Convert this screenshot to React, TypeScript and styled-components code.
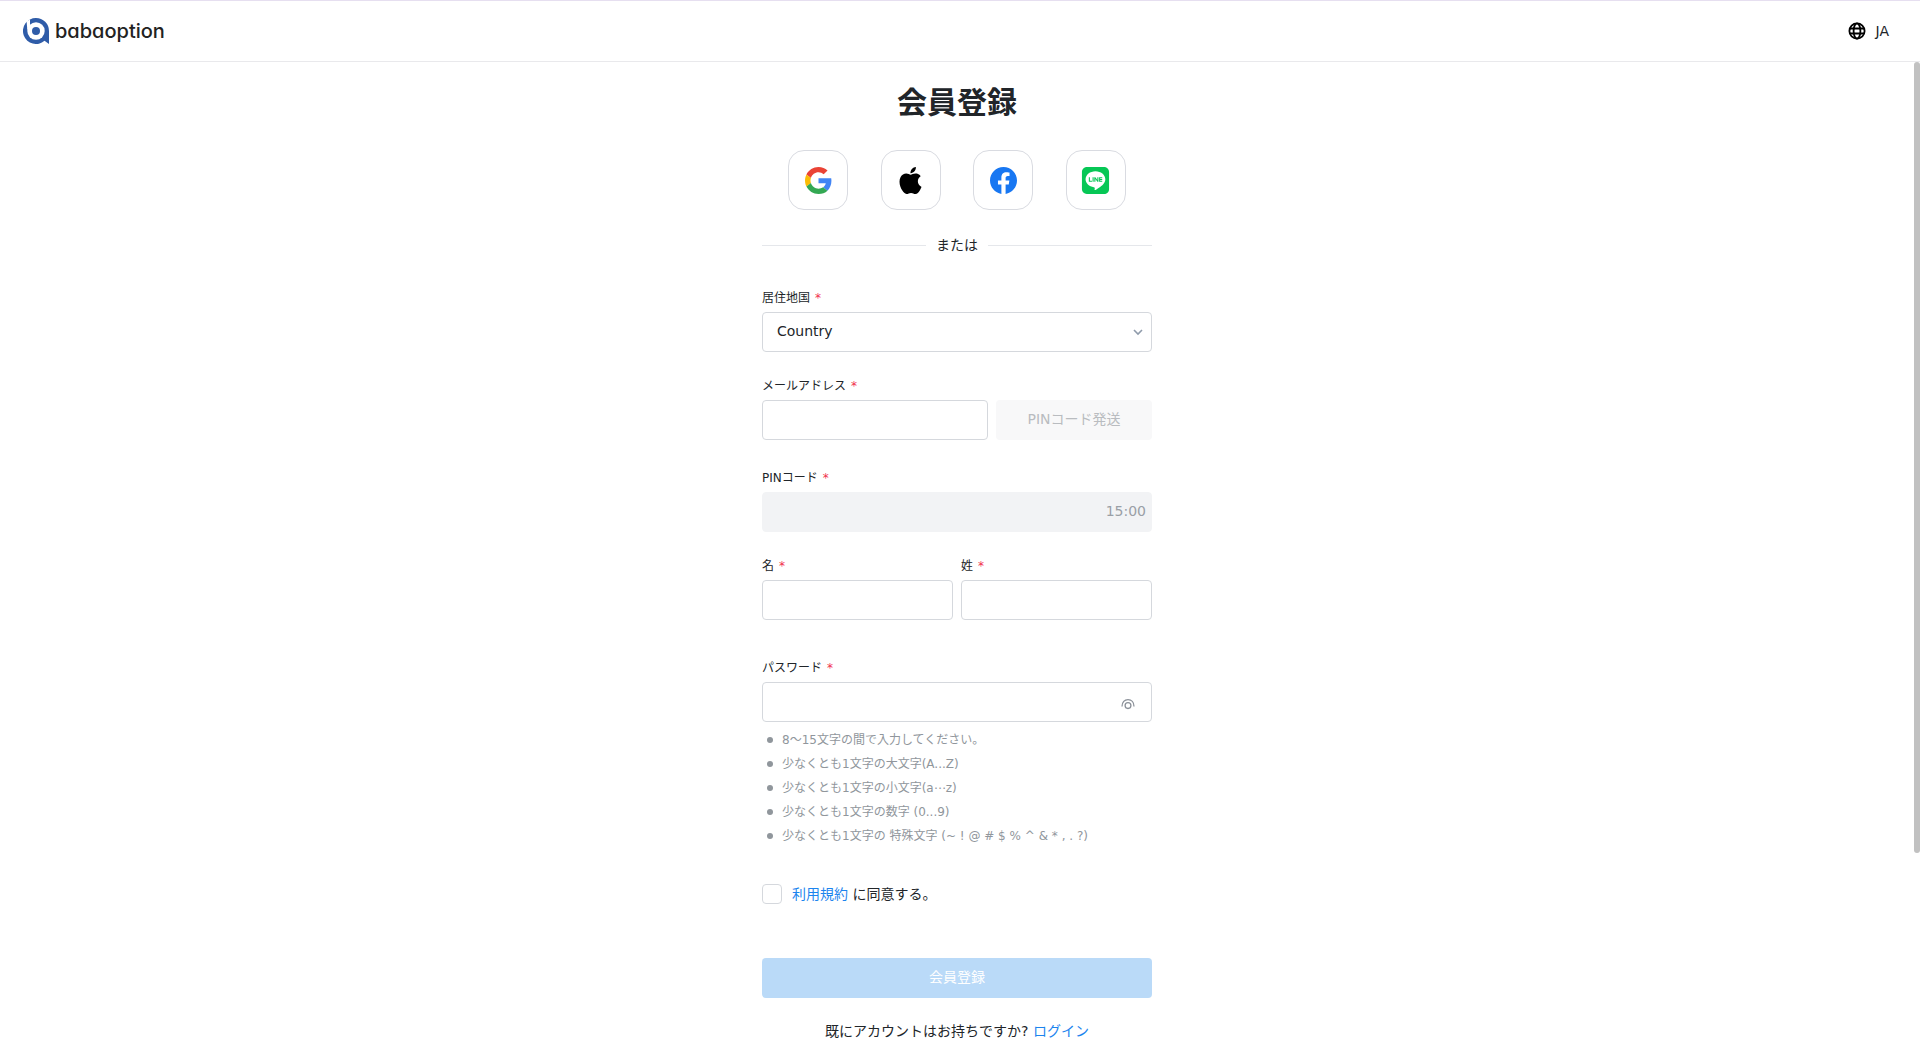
import React, { useEffect, useRef, useState } from "react";
import styled, { createGlobalStyle } from "styled-components";
import { FaLine } from "react-icons/fa";
import { SiApple } from "react-icons/si";

const Global = createGlobalStyle`
  *, *::before, *::after { box-sizing: border-box; }
  body {
    margin: 0;
    color: #212529;
    background: #fff;
    font-family: "DejaVu Sans", "Noto Sans CJK JP", sans-serif;
    font-size: 14px;
    line-height: 22px;
  }
  button, input, select { font: inherit; color: inherit; }
`;

const Page = styled.div`
  display: flex;
  flex-direction: column;
  height: 100vh;
`;

const Header = styled.header`
  display: flex;
  flex: none;
  align-items: center;
  justify-content: space-between;
  height: 62px;
  padding: 0 31px 0 23px;
  border-top: 1px solid #e6dff0;
  border-bottom: 1px solid #e9e9ec;
`;

const Brand = styled.a`
  display: flex;
  align-items: center;
  gap: 6px;
  color: #222;
  font-family: Inter, sans-serif;
  font-size: 20px;
  font-weight: 500;
  font-feature-settings: "cv11";
  line-height: 28px;
  text-decoration: none;
`;

const Language = styled.button`
  display: flex;
  align-items: center;
  gap: 10px;
  padding: 0;
  border: 0;
  background: none;
  cursor: pointer;
`;

const Body = styled.div`
  display: flex;
  flex: 1;
  min-height: 0;
`;

const Scroller = styled.main`
  flex: 1;
  overflow-y: auto;
  scrollbar-width: none;
`;

const Rail = styled.div`
  width: 6px;
`;

const Thumb = styled.div`
  border-radius: 3px;
  background: #c1c1c1;
`;

const Form = styled.form`
  width: 100%;
  max-width: 390px;
  margin: 0 auto;
  padding: 20px 0 229px;
`;

const Title = styled.h1`
  margin: 0 0 26px;
  font-size: 30px;
  font-weight: 700;
  line-height: 42px;
  text-align: center;
`;

const SocialRow = styled.div`
  display: flex;
  justify-content: space-between;
  margin-bottom: 24px;
  padding: 0 26px;
`;

const SocialButton = styled.button`
  display: flex;
  align-items: center;
  justify-content: center;
  width: 60px;
  height: 60px;
  padding: 0;
  border: 1px solid #d9dbe1;
  border-radius: 16px;
  background: #fff;
  cursor: pointer;
`;

const Divider = styled.div`
  display: flex;
  align-items: center;
  gap: 10px;
  margin-bottom: 32px;

  &::before,
  &::after {
    content: "";
    flex: 1;
    height: 1px;
    background: #e5e7eb;
  }
`;

const Field = styled.div<{ $space?: number }>`
  display: flex;
  flex: 1;
  flex-direction: column;
  gap: 4px;
  min-width: 0;
  margin-bottom: ${(p) => p.$space ?? 0}px;
`;

const Label = styled.label`
  font-size: 12px;
  line-height: 20px;
`;

const Required = styled.span`
  margin-left: 5px;
  color: #f1304d;
`;

const Columns = styled.div<{ $space?: number }>`
  display: flex;
  gap: 8px;
  margin-bottom: ${(p) => p.$space ?? 0}px;
`;

const Control = styled.div`
  position: relative;
`;

const Input = styled.input`
  display: block;
  width: 100%;
  min-width: 0;
  height: 40px;
  padding: 0 14px;
  border: 1px solid #d5d8dd;
  border-radius: 4px;
  background: #fff;
  outline: none;

  &:disabled {
    border-color: #f2f3f5;
    background: #f2f3f5;
  }
`;

const Select = styled.select`
  display: block;
  width: 100%;
  height: 40px;
  padding: 0 32px 2px 14px;
  border: 1px solid #d5d8dd;
  border-radius: 4px;
  background: #fff;
  appearance: none;
  outline: none;
`;

const Chevron = styled.svg`
  position: absolute;
  top: 16px;
  right: 9px;
  pointer-events: none;
`;

const Timer = styled.span`
  position: absolute;
  top: 8px;
  right: 6px;
  color: #9a9fa6;
`;

const Reveal = styled.button`
  position: absolute;
  top: 14px;
  right: 16px;
  display: flex;
  padding: 0;
  border: 0;
  background: none;
  color: #8b9199;
  cursor: pointer;
`;

const SendButton = styled.button`
  flex: none;
  width: 40%;
  height: 40px;
  padding: 0 0 2px;
  border: 0;
  border-radius: 4px;
  background: #f8f8f9;
  color: #b9bcc0;
`;

const Rules = styled.ul`
  display: flex;
  flex-direction: column;
  margin: 0 0 36px;
  padding: 0 0 0 5px;
  color: #90969c;
  font-size: 12px;
  line-height: 24px;
  list-style: none;
`;

const Rule = styled.li`
  display: flex;
  align-items: center;
  gap: 9px;
  height: 24px;

  &::before {
    content: "";
    width: 6px;
    height: 6px;
    border-radius: 50%;
    background: #90969c;
  }
`;

const Consent = styled.div`
  display: flex;
  align-items: center;
  gap: 10px;
  height: 20px;
  margin-bottom: 54px;
`;

const Checkbox = styled.input`
  width: 20px;
  height: 20px;
  margin: 0;
  border: 1px solid #d5d8dd;
  border-radius: 4px;
  background: #fff;
  appearance: none;

  &:checked { background: #1c84ee; }
`;

const Link = styled.a`
  color: #1c84ee;
  text-decoration: none;
`;

const Submit = styled.button`
  display: block;
  width: 100%;
  height: 40px;
  margin-bottom: 22px;
  padding: 0 0 2px;
  border: 0;
  border-radius: 4px;
  background: #badaf8;
  color: #fff;
`;

const Footer = styled.p`
  margin: 0;
  text-align: center;
`;

const BrandMark = () => (
  <svg width="26" height="26" viewBox="0 0 26 26" aria-hidden="true">
    <path d="M13 0a13 13 0 1 0 8.5 22.8L26 26V13A13 13 0 0 0 13 0z" fill="#2f5ca8" />
    <circle cx="13" cy="13" r="8.7" fill="#fff" />
    <path d="M3.6 3.4 7 1.4v10H4.3z" fill="#fff" />
    <circle cx="13" cy="13" r="4" fill="#2f5ca8" />
  </svg>
);

const Globe = () => (
  <svg width="18" height="18" viewBox="0 0 18 18" fill="none" stroke="#000" strokeWidth="1.8" aria-hidden="true">
    <circle cx="9" cy="9" r="7.6" />
    <ellipse cx="9" cy="9" rx="3.4" ry="7.6" />
    <path d="M2 6.5h14M2 11.5h14" />
  </svg>
);

const Google = () => (
  <svg width="27" height="27" viewBox="0 0 48 48" aria-hidden="true">
    <path fill="#EA4335" d="M24 9.5c3.54 0 6.71 1.22 9.21 3.6l6.85-6.85C35.9 2.38 30.47 0 24 0 14.62 0 6.51 5.38 2.56 13.22l7.98 6.19C12.43 13.72 17.74 9.5 24 9.5z" />
    <path fill="#4285F4" d="M46.98 24.55c0-1.57-.15-3.09-.38-4.55H24v9.02h12.94c-.58 2.96-2.26 5.48-4.78 7.18l7.73 6c4.51-4.18 7.09-10.36 7.09-17.65z" />
    <path fill="#FBBC05" d="M10.53 28.59c-.48-1.45-.76-2.99-.76-4.59s.27-3.14.76-4.59l-7.98-6.19C.92 16.46 0 20.12 0 24c0 3.88.92 7.54 2.56 10.78l7.97-6.19z" />
    <path fill="#34A853" d="M24 48c6.48 0 11.93-2.13 15.89-5.81l-7.73-6c-2.15 1.45-4.92 2.3-8.16 2.3-6.26 0-11.57-4.22-13.47-9.91l-7.98 6.19C6.51 42.62 14.62 48 24 48z" />
  </svg>
);

const Facebook = () => (
  <svg width="27" height="27" viewBox="0 0 24 24" aria-hidden="true">
    <path fill="#1877F2" d="M24 12.073c0-6.627-5.373-12-12-12s-12 5.373-12 12c0 5.99 4.388 10.954 10.125 11.854v-8.385H7.078v-3.47h3.047V9.43c0-3.007 1.792-4.669 4.533-4.669 1.312 0 2.686.235 2.686.235v2.953H15.83c-1.491 0-1.956.925-1.956 1.874v2.25h3.328l-.532 3.47h-2.796v8.385C19.612 23.027 24 18.062 24 12.073z" />
  </svg>
);

const Eye = () => (
  <svg width="16" height="16" viewBox="0 0 16 16" fill="none" stroke="currentColor" strokeWidth="1.3" aria-hidden="true">
    <path d="M2 10.5C2 6.2 4.6 3.6 8 3.6s6 2.6 6 6.9" />
    <circle cx="8" cy="9.6" r="2.9" />
  </svg>
);

const rules = [
  "8～15文字の間で入力してください。",
  "少なくとも1文字の大文字(A...Z)",
  "少なくとも1文字の小文字(a⋯z)",
  "少なくとも1文字の数字 (0...9)",
  "少なくとも1文字の 特殊文字 (~ ! @ # $ % ^ & * , . ?)",
];

const providers = [
  { name: "Google", icon: <Google /> },
  { name: "Apple", icon: <SiApple size={27} color="#000" /> },
  { name: "Facebook", icon: <Facebook /> },
  { name: "LINE", icon: <FaLine size={31} color="#06c755" /> },
];

function RequiredLabel({ id, children }: { id: string; children: React.ReactNode }) {
  return (
    <Label htmlFor={id}>
      {children}
      <Required>*</Required>
    </Label>
  );
}

export default function App() {
  const scroller = useRef<HTMLElement>(null);
  const [thumb, setThumb] = useState({ top: 0, height: 0 });
  const [visible, setVisible] = useState(false);

  const measure = () => {
    const el = scroller.current;
    if (!el) return;
    const ratio = el.clientHeight / el.scrollHeight;
    setThumb(
      ratio < 1
        ? { top: Math.round(el.scrollTop * ratio), height: Math.round(el.clientHeight * ratio) }
        : { top: 0, height: 0 },
    );
  };

  useEffect(() => {
    measure();
    window.addEventListener("resize", measure);
    return () => window.removeEventListener("resize", measure);
  }, []);

  return (
    <Page>
      <Global />
      <Header>
        <Brand href="#">
          <BrandMark />
          babaoption
        </Brand>
        <Language type="button">
          <Globe />
          JA
        </Language>
      </Header>
      <Body>
        <Scroller ref={scroller} onScroll={measure}>
          <Form onSubmit={(e) => e.preventDefault()}>
            <Title>会員登録</Title>
            <SocialRow>
              {providers.map((p) => (
                <SocialButton key={p.name} type="button" aria-label={p.name}>
                  {p.icon}
                </SocialButton>
              ))}
            </SocialRow>
            <Divider>または</Divider>

            <Field $space={24}>
              <RequiredLabel id="country">居住地国</RequiredLabel>
              <Control>
                <Select id="country">
                  <option>Country</option>
                </Select>
                <Chevron width="10" height="8" viewBox="0 0 10 8" fill="none" stroke="#8f9bab" strokeWidth="1.6">
                  <path d="M1 2l4 4 4-4" />
                </Chevron>
              </Control>
            </Field>

            <Field $space={28}>
              <RequiredLabel id="email">メールアドレス</RequiredLabel>
              <Columns>
                <Input id="email" type="email" />
                <SendButton type="button" disabled>
                  PINコード発送
                </SendButton>
              </Columns>
            </Field>

            <Field $space={24}>
              <RequiredLabel id="pin">PINコード</RequiredLabel>
              <Control>
                <Input id="pin" disabled />
                <Timer>15:00</Timer>
              </Control>
            </Field>

            <Columns $space={38}>
              <Field>
                <RequiredLabel id="first">名</RequiredLabel>
                <Input id="first" />
              </Field>
              <Field>
                <RequiredLabel id="last">姓</RequiredLabel>
                <Input id="last" />
              </Field>
            </Columns>

            <Field $space={6}>
              <RequiredLabel id="password">パスワード</RequiredLabel>
              <Control>
                <Input id="password" type={visible ? "text" : "password"} />
                <Reveal type="button" aria-label="パスワードを表示" onClick={() => setVisible(!visible)}>
                  <Eye />
                </Reveal>
              </Control>
            </Field>

            <Rules>
              {rules.map((r) => (
                <Rule key={r}>{r}</Rule>
              ))}
            </Rules>

            <Consent>
              <Checkbox id="terms" type="checkbox" />
              <label htmlFor="terms">
                <Link href="#">利用規約</Link> に同意する。
              </label>
            </Consent>

            <Submit type="submit" disabled>
              会員登録
            </Submit>
            <Footer>
              既にアカウントはお持ちですか? <Link href="#">ログイン</Link>
            </Footer>
          </Form>
        </Scroller>
        <Rail>
          <Thumb style={{ height: thumb.height, marginTop: thumb.top }} />
        </Rail>
      </Body>
    </Page>
  );
}
